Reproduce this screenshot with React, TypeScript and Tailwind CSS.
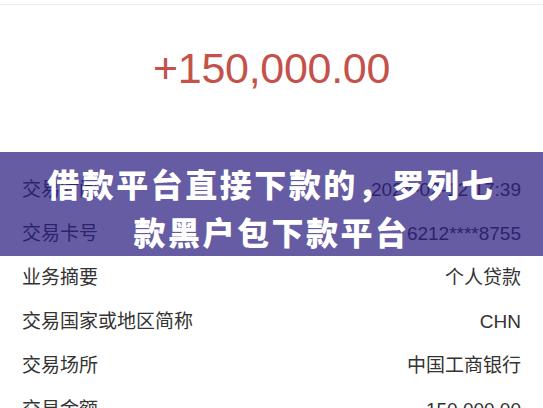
import React from "react";

const rows: [string, string][] = [
  ["交易时间", "2024-02-12 17:39"],
  ["交易卡号", "6212****8755"],
  ["业务摘要", "个人贷款"],
  ["交易国家或地区简称", "CHN"],
  ["交易场所", "中国工商银行"],
  ["交易金额", "150,000.00"],
];

export default function App() {
  return (
    <div
      className="w-[543px] h-[408px] overflow-hidden bg-white relative"
      style={{ fontFamily: '"Liberation Sans", "Noto Sans CJK SC", sans-serif' }}
    >
      <div className="h-[4px] bg-white" />
      <div className="border-t border-[#ececec] h-[164px] flex justify-center pt-[36px]">
        <div className="text-[43px] leading-[54px] text-[#c4514a] tracking-[-0.3px]">+150,000.00</div>
      </div>
      <div className="flex flex-col">
        {rows.map(([k, v]) => (
          <div key={k} className="h-[44px] flex items-center justify-between px-[22px] text-[19px] text-[#333333]">
            <span>{k}</span>
            <span>{v}</span>
          </div>
        ))}
      </div>
      <div className="absolute left-0 right-0 top-[152px] h-[104px] bg-[rgba(41,29,127,0.72)] flex flex-col items-center justify-center pt-[6px]">
        <div
          className="text-white font-black text-[32px] leading-[48px] tracking-[2.5px] text-center"
          style={{ fontFamily: '"Noto Sans CJK SC", sans-serif' }}
        >
          <div>借款平台直接下款的，罗列七</div>
          <div>款黑户包下款平台</div>
        </div>
      </div>
    </div>
  );
}
